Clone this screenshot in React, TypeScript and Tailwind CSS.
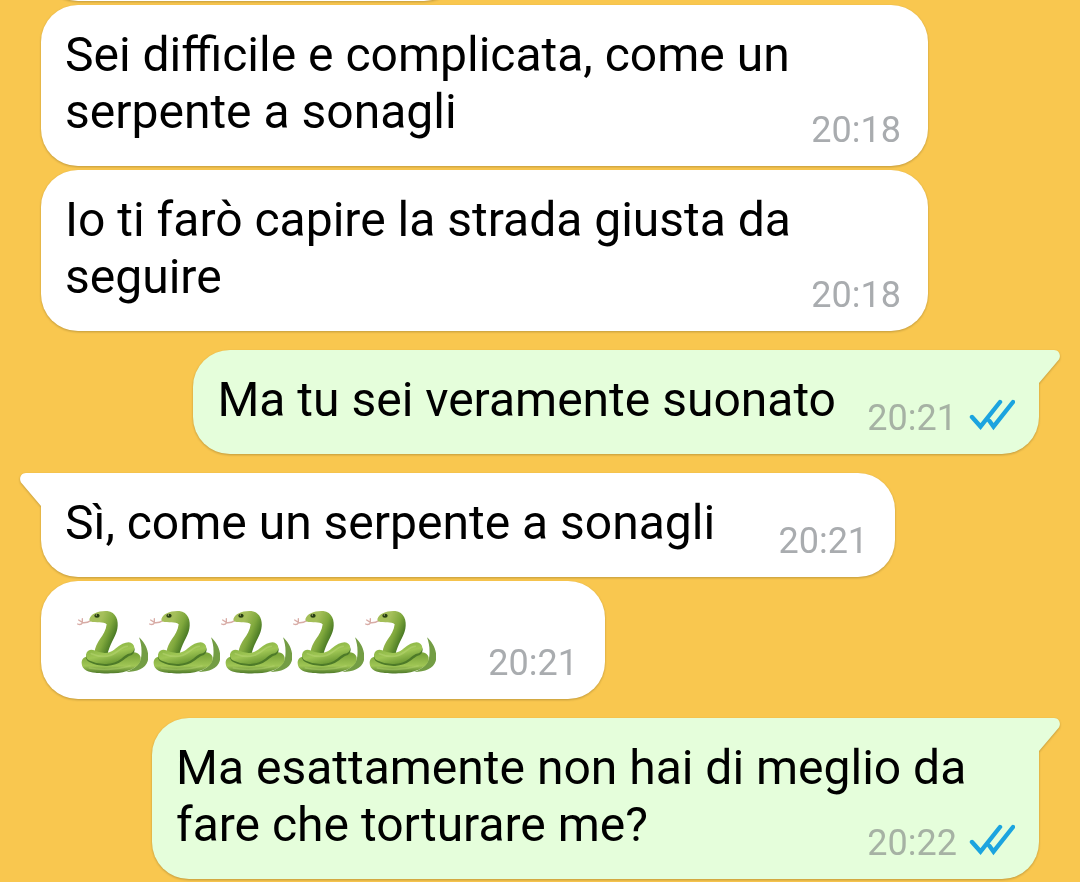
type Message = {
  id: number;
  from: "me" | "them";
  text?: string;
  snakes?: number;
  time: string;
  tail?: boolean;
  gap: "tight" | "wide";
};

const MESSAGES: Message[] = [
  { id: 1, from: "them", text: "Sei difficile e complicata, come un serpente a sonagli", time: "20:18", gap: "tight" },
  { id: 2, from: "them", text: "Io ti farò capire la strada giusta da seguire", time: "20:18", gap: "tight" },
  { id: 3, from: "me", text: "Ma tu sei veramente suonato", time: "20:21", tail: true, gap: "wide" },
  { id: 4, from: "them", text: "Sì, come un serpente a sonagli", time: "20:21", tail: true, gap: "wide" },
  { id: 5, from: "them", snakes: 5, time: "20:21", gap: "tight" },
  { id: 6, from: "me", text: "Ma esattamente non hai di meglio da fare che torturare me?", time: "20:22", tail: true, gap: "wide" },
];

function SnakeDefs() {
  return (
    <svg width="0" height="0" className="absolute" aria-hidden="true">
      <defs>
        <linearGradient id="neck" gradientUnits="userSpaceOnUse" x1="84" y1="80" x2="142" y2="104">
          <stop offset="0" stopColor="#a5bf5a" />
          <stop offset="0.5" stopColor="#7fa83c" />
          <stop offset="1" stopColor="#3f7020" />
        </linearGradient>
        <linearGradient id="coil" gradientUnits="userSpaceOnUse" x1="100" y1="128" x2="116" y2="192">
          <stop offset="0" stopColor="#84b03f" />
          <stop offset="0.55" stopColor="#9fc654" />
          <stop offset="1" stopColor="#6d9a34" />
        </linearGradient>
        <linearGradient id="base" gradientUnits="userSpaceOnUse" x1="0" y1="164" x2="0" y2="220">
          <stop offset="0" stopColor="#7ba63a" />
          <stop offset="0.6" stopColor="#a0c655" />
          <stop offset="1" stopColor="#4f7a2a" />
        </linearGradient>
      </defs>
    </svg>
  );
}

function Snake() {
  return (
    <svg viewBox="18 24 216 204" className="h-[68px] w-[72px]" fill="none">
      <path d="M64 61C54 67 46 69 38 68L26 60M37 66V56M38 68C34 74 29 75 23 72" stroke="#d8aca6" strokeWidth="4" strokeLinecap="round" />
      <path d="M207 112C226 128 240 158 233 184C226 206 202 216 168 216C196 206 212 190 214 168C216 146 213 128 207 112Z" fill="#739d44" />
      <path d="M35 190C34 178 42 170 52 170L186 156C206 156 216 168 211 184C203 204 170 219 130 220C94 221 66 219 50 212C40 207 35 199 35 190Z" fill="url(#base)" />
      <path d="M58 58C62 40 88 31 112 33C138 36 147 62 142 86C137 112 118 132 112 166L74 160C74 124 106 110 110 73C100 63 80 71 60 64Z" fill="url(#neck)" />
      <path d="M65 171C96 186 128 183 148 168C160 159 168 151 177 150" stroke="#4d7a28" strokeWidth="34" strokeLinecap="round" />
      <path d="M65 166C94 180 124 178 144 162C156 152 164 144 176 144" stroke="url(#coil)" strokeWidth="34" strokeLinecap="round" />
      <path d="M64 161C92 173 118 172 140 156C152 147 160 139 172 139" stroke="#b7d573" strokeWidth="5" strokeLinecap="round" opacity=".5" />
      <path d="M58 204C88 211 140 210 180 198" stroke="#b9d776" strokeWidth="5" strokeLinecap="round" opacity=".4" />
      <ellipse cx="81" cy="47" rx="8" ry="6" fill="#273d12" />
      <circle cx="79" cy="45" r="2" fill="#c1c58b" />
    </svg>
  );
}

function ReadTicks() {
  return (
    <svg viewBox="0 0 46 32" className="h-8 w-[46px]" fill="none" role="img" aria-label="Letto">
      <path d="M3 18L11.500 27.500L31 3M20.500 22L24.500 27.500L44 3" stroke="#1ca4df" strokeWidth="4.4" strokeLinecap="round" />
    </svg>
  );
}

function Tail({ mine }: { mine: boolean }) {
  return (
    <svg
      viewBox="0 0 24 36"
      className={`absolute top-0 h-9 w-6 ${
        mine ? "-right-[21px] text-[#e5fedb]" : "-left-[21px] -scale-x-100 text-white"
      }`}
      aria-hidden="true"
    >
      <path d="M0 0H18C23.500 0 25.500 6 22.500 10L3 33V36H0Z" fill="currentColor" />
    </svg>
  );
}

function Bubble({ message }: { message: Message }) {
  const mine = message.from === "me";
  const corner = !message.tail ? "" : mine ? "rounded-tr-none" : "rounded-tl-none";

  return (
    <li
      className={`relative grid w-fit max-w-[887px] rounded-[37px] drop-shadow-[0_1px_1px_rgba(110,85,30,0.4)] ${
        mine ? "self-end bg-[#e5fedb]" : "bg-white"
      } ${corner} ${message.gap === "wide" ? "mt-[19px]" : "mt-1"}`}
    >
      {message.tail && <Tail mine={mine} />}
      {message.snakes ? (
        <div className="col-start-1 row-start-1 flex pt-[27px] pr-[169px] pb-[23px] pl-[35px]" role="img" aria-label="Serpenti">
          {Array.from({ length: message.snakes }, (_, i) => (
            <Snake key={i} />
          ))}
        </div>
      ) : (
        <p className="col-start-1 row-start-1 px-6 pt-[21px] pb-[26px] text-[48px] leading-[57px] text-black">
          {message.text}
          {/* keeps the last line clear of the time */}
          <span className={`inline-block h-px ${mine ? "w-[179px]" : "w-[156px]"}`} />
        </p>
      )}
      <div
        className={`col-start-1 row-start-1 flex items-end gap-3 self-end justify-self-end pb-[15px] text-[36px] leading-[42px] ${
          mine ? "pr-6 text-[#a6b2a4]" : "pr-[27px] text-[#a9acaf]"
        }`}
      >
        <time>{message.time}</time>
        {mine && (
          <span className="pb-2">
            <ReadTicks />
          </span>
        )}
      </div>
    </li>
  );
}

export default function App() {
  return (
    <main className="min-h-screen overflow-hidden bg-[#f9c74f] px-[41px] font-['Roboto',sans-serif]">
      <SnakeDefs />
      {/* bottom edge of the message scrolled out of view */}
      <div className="flex h-px w-[420px] flex-col justify-end">
        <div className="h-20 shrink-0 rounded-[37px] bg-white drop-shadow-[0_1px_1px_rgba(110,85,30,0.4)]" />
      </div>
      <ul className="flex flex-col items-start">
        {MESSAGES.map((message) => (
          <Bubble key={message.id} message={message} />
        ))}
      </ul>
    </main>
  );
}
